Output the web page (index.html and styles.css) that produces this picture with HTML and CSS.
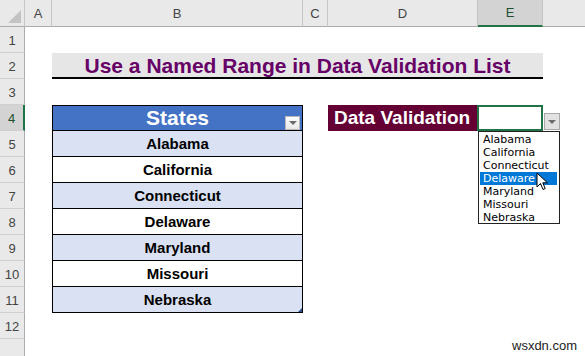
FILE: index.html
```html
<!DOCTYPE html>
<html lang="en">
<head>
    <meta charset="UTF-8">
    <title>Named Range in Data Validation List</title>
    <link rel="stylesheet" href="styles.css">
</head>
<body>
    <div class="sheet">
        <!-- column headers -->
        <div class="corner"><span class="corner-tri"></span></div>
        <div class="col-head">A</div>
        <div class="col-head">B</div>
        <div class="col-head">C</div>
        <div class="col-head">D</div>
        <div class="col-head active">E</div>
        <div class="col-head last"></div>

        <!-- row headers -->
        <div class="row-head" style="grid-row: 2">1</div>
        <div class="row-head" style="grid-row: 3">2</div>
        <div class="row-head" style="grid-row: 4">3</div>
        <div class="row-head active" style="grid-row: 5">4</div>
        <div class="row-head" style="grid-row: 6">5</div>
        <div class="row-head" style="grid-row: 7">6</div>
        <div class="row-head" style="grid-row: 8">7</div>
        <div class="row-head" style="grid-row: 9">8</div>
        <div class="row-head" style="grid-row: 10">9</div>
        <div class="row-head" style="grid-row: 11">10</div>
        <div class="row-head" style="grid-row: 12">11</div>
        <div class="row-head" style="grid-row: 13">12</div>
        <div class="row-head" style="grid-row: 14"></div>

        <!-- title -->
        <div class="title">Use a Named Range in Data Validation List</div>

        <!-- states table -->
        <div class="state head" style="grid-row: 5">
            States
            <span class="filter-btn"><span class="tri"></span></span>
        </div>
        <div class="state band" style="grid-row: 6">Alabama</div>
        <div class="state" style="grid-row: 7">California</div>
        <div class="state band" style="grid-row: 8">Connecticut</div>
        <div class="state" style="grid-row: 9">Delaware</div>
        <div class="state band" style="grid-row: 10">Maryland</div>
        <div class="state" style="grid-row: 11">Missouri</div>
        <div class="state band last" style="grid-row: 12">Nebraska<span class="resize"></span></div>

        <!-- data validation -->
        <div class="dv-label">Data Validation</div>
        <div class="dv-cell"></div>

        <!-- dropdown overlay -->
        <div class="dv-btn"><span class="tri"></span></div>
        <ul class="dv-list">
            <li>Alabama</li>
            <li>California</li>
            <li>Connecticut</li>
            <li class="selected">Delaware</li>
            <li>Maryland</li>
            <li>Missouri</li>
            <li>Nebraska</li>
        </ul>
        <svg class="cursor" width="13" height="20" viewBox="0 0 13 20">
            <path d="M1 1 L1 15 L4.5 11.5 L7 17.5 L9.2 16.5 L6.8 10.8 L11.5 10.8 Z" fill="#fff" stroke="#000" stroke-width="1" stroke-linejoin="round"/>
        </svg>

        <div class="watermark">wsxdn.com</div>
    </div>
</body>
</html>
```

FILE: styles.css
```css
* {
    box-sizing: border-box;
}

body {
    margin: 0;
    background: #fff;
    font-family: "Liberation Sans", Arial, sans-serif;
    overflow: hidden;
}

.sheet {
    position: relative;
    display: grid;
    grid-template-columns: 25px 27px 251px 25px 150px 65px 42px;
    grid-template-rows: 27px repeat(13, 26px);
    width: 585px;
    height: 356px;
}

/* headers */
.corner {
    grid-row: 1;
    grid-column: 1;
    position: relative;
    background: #e9e9e9;
    border-right: 1px solid #c6c6c6;
    border-bottom: 1px solid #ababab;
}

.corner-tri {
    position: absolute;
    right: 3px;
    bottom: 3px;
    width: 0;
    height: 0;
    border-left: 13px solid transparent;
    border-bottom: 13px solid #c3c3c3;
}

.col-head {
    grid-row: 1;
    display: flex;
    align-items: flex-end;
    justify-content: center;
    padding-bottom: 5px;
    background: #e9e9e9;
    border-right: 1px solid #c6c6c6;
    border-bottom: 1px solid #ababab;
    color: #444;
    font-size: 13px;
}

.col-head.active {
    background: #d3d3d3;
    border-bottom: 2px solid #217346;
    color: #1f4e2f;
}

.col-head.last {
    border-right: none;
}

.row-head {
    grid-column: 1;
    display: flex;
    align-items: center;
    justify-content: center;
    padding-top: 2px;
    background: #e9e9e9;
    border-right: 1px solid #ababab;
    border-bottom: 1px solid #d0d0d0;
    color: #444;
    font-size: 13px;
}

.row-head.active {
    background: #d3d3d3;
    border-right: 2px solid #217346;
    color: #1f4e2f;
}

/* title */
.title {
    grid-row: 3;
    grid-column: 3 / 7;
    display: flex;
    align-items: center;
    justify-content: center;
    background: #e7e6e6;
    border-bottom: 2px solid #000;
    color: #660066;
    font-size: 21px;
    font-weight: bold;
    padding-top: 1px;
}

/* states table */
.state {
    grid-column: 3;
    position: relative;
    display: flex;
    align-items: center;
    justify-content: center;
    border-left: 1px solid #000;
    border-right: 1px solid #000;
    border-bottom: 1px solid #000;
    background: #fff;
    color: #000;
    font-size: 15px;
    font-weight: bold;
}

.state.band {
    background: #d9e1f2;
}

.state.head {
    border-top: 1px solid #000;
    background: #4472c4;
    color: #fff;
    font-size: 21px;
}

.filter-btn {
    position: absolute;
    right: 2px;
    top: 10px;
    width: 15px;
    height: 14px;
    background: linear-gradient(#fdfdfd, #e8e8e8);
    border: 1px solid #b9b9b9;
    display: flex;
    align-items: center;
    justify-content: center;
}

.tri {
    width: 0;
    height: 0;
    border-left: 4px solid transparent;
    border-right: 4px solid transparent;
    border-top: 4px solid #6b6b6b;
}

.resize {
    position: absolute;
    right: 0;
    bottom: 0;
    width: 0;
    height: 0;
    border-left: 4px solid transparent;
    border-bottom: 4px solid #2f4f8f;
}

/* data validation */
.dv-label {
    grid-row: 5;
    grid-column: 5;
    display: flex;
    align-items: center;
    padding-left: 6px;
    background: #650035;
    color: #fff;
    font-size: 19px;
    font-weight: bold;
}

.dv-cell {
    grid-row: 5;
    grid-column: 6;
    border: 2px solid #217346;
    margin-left: -1px;
}

.dv-btn {
    position: absolute;
    left: 544px;
    top: 113px;
    width: 16px;
    height: 17px;
    background: #e1e1e1;
    border: 1px solid #a9a9a9;
    display: flex;
    align-items: center;
    justify-content: center;
}

.dv-list {
    position: absolute;
    left: 478px;
    top: 131px;
    width: 82px;
    height: 93px;
    margin: 0;
    padding: 1px 2px 0 1px;
    list-style: none;
    background: #fff;
    border: 1px solid #222;
    font-family: "DejaVu Sans", sans-serif;
    font-size: 11px;
    color: #000;
}

.dv-list li {
    height: 13px;
    line-height: 13px;
    padding-left: 3px;
    white-space: nowrap;
}

.dv-list li.selected {
    background: #0078d7;
    color: #fff;
}

.cursor {
    position: absolute;
    left: 536px;
    top: 172px;
}

.watermark {
    position: absolute;
    left: 512px;
    top: 338px;
    font-size: 13px;
    color: #222;
}
```
